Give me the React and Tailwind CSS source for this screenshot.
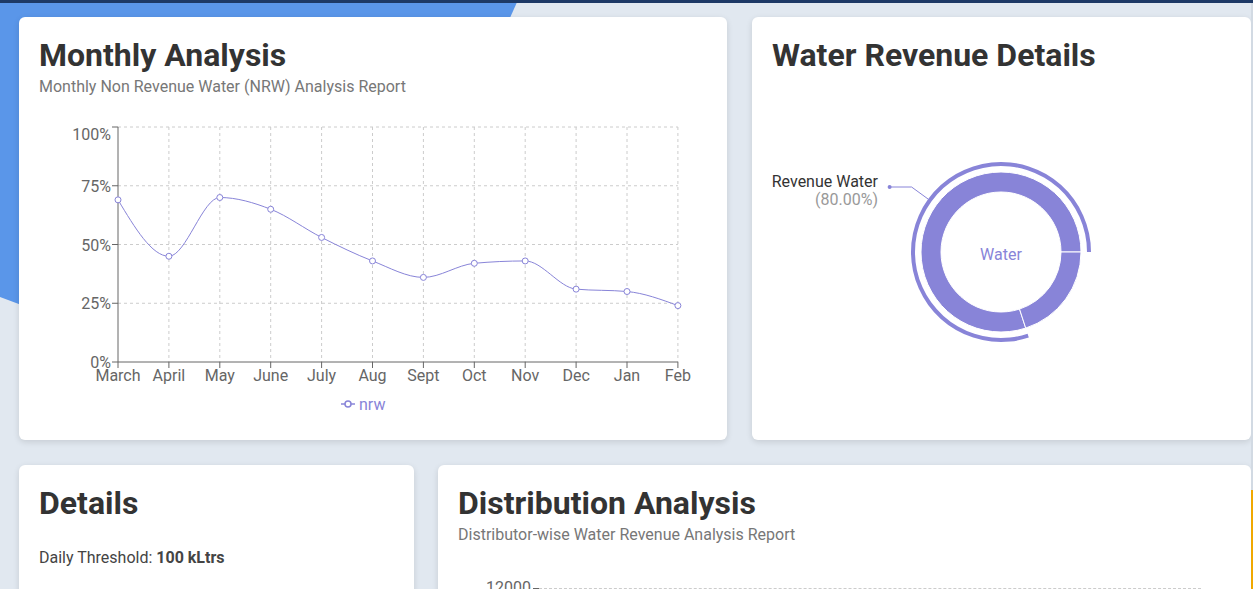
import React from 'react';

const months = ['March', 'April', 'May', 'June', 'July', 'Aug', 'Sept', 'Oct', 'Nov', 'Dec', 'Jan', 'Feb'];
const nrw = [69, 45, 70, 65, 53, 43, 36, 42, 43, 31, 30, 24];

// chart geometry (svg coords)
const X0 = 79;
const STEP = 50.9;
const Y0 = 251; // 0%
const YH = 235; // height of 100%

const px = (i) => X0 + i * STEP;
const py = (v) => Y0 - (v / 100) * YH;

// d3 style monotoneX curve
const monotonePath = (pts) => {
  const n = pts.length;
  const sign = (v) => (v < 0 ? -1 : 1);
  const t = new Array(n).fill(0);
  for (let i = 1; i < n - 1; i++) {
    const [x0, y0] = pts[i - 1];
    const [x1, y1] = pts[i];
    const [x2, y2] = pts[i + 1];
    const h0 = x1 - x0;
    const h1 = x2 - x1;
    const s0 = (y1 - y0) / h0;
    const s1 = (y2 - y1) / h1;
    const p = (s0 * h1 + s1 * h0) / (h0 + h1);
    t[i] = (sign(s0) + sign(s1)) * Math.min(Math.abs(s0), Math.abs(s1), 0.5 * Math.abs(p)) || 0;
  }
  const sA = (pts[1][1] - pts[0][1]) / (pts[1][0] - pts[0][0]);
  t[0] = (3 * sA - t[1]) / 2;
  const sB = (pts[n - 1][1] - pts[n - 2][1]) / (pts[n - 1][0] - pts[n - 2][0]);
  t[n - 1] = (3 * sB - t[n - 2]) / 2;
  let d = `M${pts[0][0]},${pts[0][1]}`;
  for (let i = 0; i < n - 1; i++) {
    const [x0, y0] = pts[i];
    const [x1, y1] = pts[i + 1];
    const dx = (x1 - x0) / 3;
    d += `C${x0 + dx},${y0 + dx * t[i]},${x1 - dx},${y1 - dx * t[i + 1]},${x1},${y1}`;
  }
  return d;
};

const MonthlyChart = () => {
  const pts = nrw.map((v, i) => [px(i), py(v)]);
  return (
    <svg width="668" height="310" className="block">
      {/* grid */}
      {[25, 50, 75, 100].map((v) => (
        <line key={v} x1={X0} x2={px(11)} y1={py(v)} y2={py(v)} stroke="#ccc" strokeDasharray="3 3" />
      ))}
      {months.map((m, i) =>
        i === 0 ? null : (
          <line key={m} x1={px(i)} x2={px(i)} y1={py(100)} y2={Y0} stroke="#ccc" strokeDasharray="3 3" />
        )
      )}
      {/* axes */}
      <line x1={X0} x2={X0} y1={py(100)} y2={Y0} stroke="#666" />
      <line x1={X0} x2={px(11)} y1={Y0} y2={Y0} stroke="#666" />
      {[0, 25, 50, 75, 100].map((v) => (
        <g key={v}>
          <line x1={X0 - 6} x2={X0} y1={py(v)} y2={py(v)} stroke="#666" />
          <text x={X0 - 7} y={py(v) + (v === 100 ? 13 : 6)} textAnchor="end" fill="#666" fontSize="16">
            {v}%
          </text>
        </g>
      ))}
      {months.map((m, i) => (
        <g key={m}>
          <line x1={px(i)} x2={px(i)} y1={Y0} y2={Y0 + 6} stroke="#666" />
          <text x={px(i)} y={Y0 + 19} textAnchor="middle" fill="#666" fontSize="16">
            {m}
          </text>
        </g>
      ))}
      <path d={monotonePath(pts)} fill="none" stroke="#8884d8" strokeWidth="1" />
      {pts.map(([x, y], i) => (
        <circle key={i} cx={x} cy={y} r="3" fill="#fff" stroke="#8884d8" />
      ))}
      {/* legend */}
      <line x1="302" x2="316" y1="293" y2="293" stroke="#8884d8" strokeWidth="1.5" />
      <circle cx="309" cy="293" r="3" fill="#fff" stroke="#8884d8" strokeWidth="1.5" />
      <text x="320" y="299" fill="#8884d8" fontSize="16">
        nrw
      </text>
    </svg>
  );
};

const arc = (cx, cy, rOut, rIn, a0, a1) => {
  // angles in degrees, counterclockwise from 3 o'clock
  const rad = (a) => (a * Math.PI) / 180;
  const p = (r, a) => [cx + r * Math.cos(rad(a)), cy - r * Math.sin(rad(a))];
  const large = a1 - a0 > 180 ? 1 : 0;
  const [x1, y1] = p(rOut, a0);
  const [x2, y2] = p(rOut, a1);
  const [x3, y3] = p(rIn, a1);
  const [x4, y4] = p(rIn, a0);
  return `M${x1},${y1}A${rOut},${rOut} 0 ${large} 0 ${x2},${y2}L${x3},${y3}A${rIn},${rIn} 0 ${large} 1 ${x4},${y4}Z`;
};

const DonutChart = () => {
  const cx = 229;
  const cy = 142;
  return (
    <svg width="459" height="310" className="block">
      <path d={arc(cx, cy, 80, 60, 0, 288)} fill="#8884d8" stroke="#fff" />
      <path d={arc(cx, cy, 80, 60, 288, 360)} fill="#8884d8" stroke="#fff" />
      <path d={arc(cx, cy, 90, 86, 0, 288)} fill="#8884d8" />
      <polyline points="156.2,89.1 139.6,77 117.6,77" fill="none" stroke="#8884d8" />
      <circle cx="117.6" cy="77" r="2" fill="#8884d8" />
      <text x="106" y="77" textAnchor="end" fill="#333" fontSize="16">
        Revenue Water
      </text>
      <text x="106" y="95" textAnchor="end" fill="#999" fontSize="16">
        (80.00%)
      </text>
      <text x={cx} y={cy + 8} textAnchor="middle" fill="#8884d8" fontSize="16">
        Water
      </text>
    </svg>
  );
};

const Card = ({ className = '', children }) => (
  <div className={`bg-white rounded-md shadow-[0_2px_6px_rgba(0,0,0,0.12)] p-5 ${className}`}>{children}</div>
);

const Title = ({ children }) => (
  <h2 className="text-[32px] leading-9 font-bold text-[#333]">{children}</h2>
);

const Sub = ({ children }) => <p className="mt-1 text-[16px] leading-5 text-[#777]">{children}</p>;

const App = () => {
  return (
    <div
      className="relative h-[589px] w-full overflow-hidden bg-[#e1e8f0]"
      style={{ fontFamily: 'Roboto, "Liberation Sans", sans-serif' }}
    >
      <svg className="absolute left-0 top-0" width="520" height="430">
        <polygon points="0,0 518,0 330,420 0,297" fill="#5a96e9" />
      </svg>
      <div className="relative h-[3px] bg-[#1d3966]" />
      <div className="relative flex h-[586px]">
        <div className="flex-1 pl-[19px] pt-[14px]">
          <div className="flex gap-[25px]">
            <Card className="w-[708px] h-[423px]">
              <Title>Monthly Analysis</Title>
              <Sub>Monthly Non Revenue Water (NRW) Analysis Report</Sub>
              <div className="mt-[14px]">
                <MonthlyChart />
              </div>
            </Card>
            <Card className="flex-1 h-[423px]">
              <Title>Water Revenue Details</Title>
              <div className="mt-[37px]">
                <DonutChart />
              </div>
            </Card>
          </div>
          <div className="mt-[25px] flex gap-[24px]">
            <Card className="w-[395px] h-[300px]">
              <Title>Details</Title>
              <p className="mt-[27px] text-[16px] leading-5 text-[#444]">
                Daily Threshold: <span className="font-bold">100 kLtrs</span>
              </p>
            </Card>
            <Card className="flex-1 h-[300px]">
              <Title>Distribution Analysis</Title>
              <Sub>Distributor-wise Water Revenue Analysis Report</Sub>
              <div className="mt-[33px] flex items-center">
                <span className="w-[73px] text-right text-[16px] leading-5 text-[#666]">12000</span>
                <span className="ml-[2px] h-px w-[6px] bg-[#666]" />
                <span className="h-0 w-[662px] border-t border-dashed border-[#ccc]" />
              </div>
            </Card>
          </div>
        </div>
        <div className="flex w-[2px] flex-col">
          <div className="h-[487px] bg-[#d2dae3]" />
          <div className="flex-1 bg-[#f0a800]" />
        </div>
      </div>
    </div>
  );
};

export default App;
